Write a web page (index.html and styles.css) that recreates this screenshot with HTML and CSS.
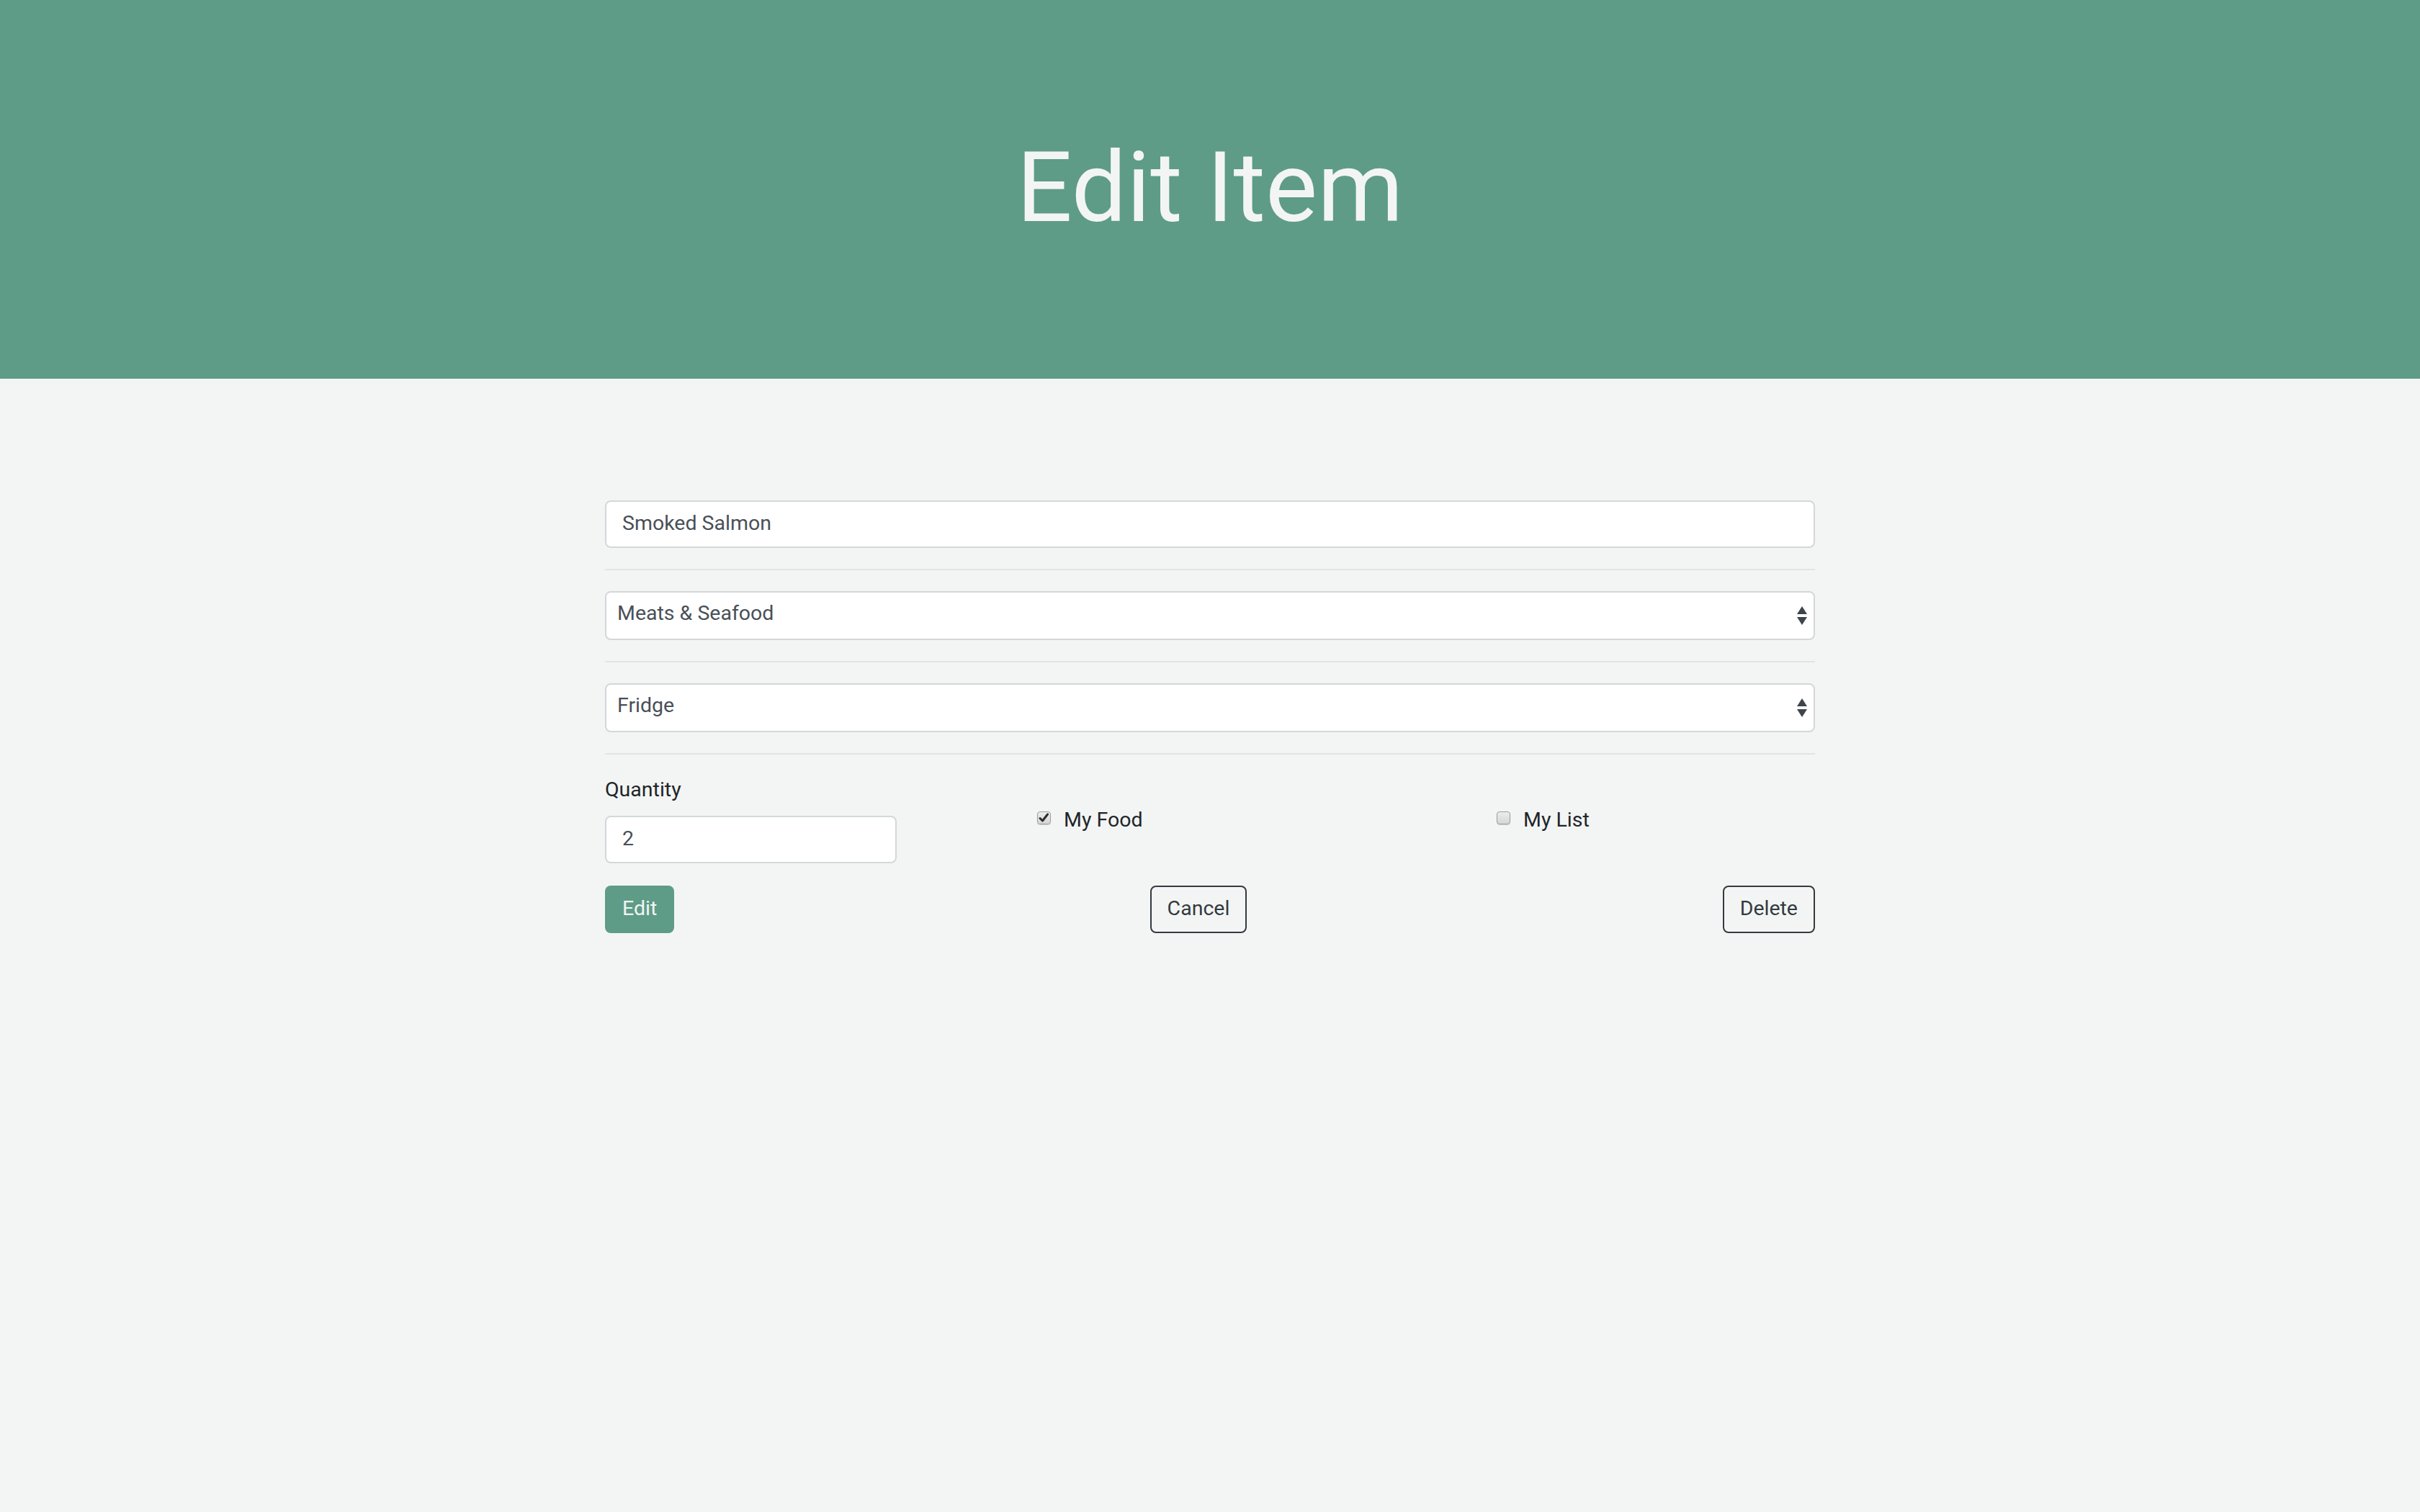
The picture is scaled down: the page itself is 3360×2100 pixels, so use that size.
FILE: index.html
```html
<!DOCTYPE html>
<html lang="en">
<head>
<meta charset="utf-8">
<title>Edit Item</title>
<link rel="stylesheet" href="styles.css">
</head>
<body>
<header class="hero">
  <h1 class="hero-title">Edit Item</h1>
</header>
<main class="container">
  <form class="item-form">
    <input class="field text-field" type="text" value="Smoked Salmon">
    <hr class="divider">
    <div class="select-wrap">
      <select class="field select-field"><option>Meats &amp; Seafood</option></select>
      <svg class="select-arrows" width="14" height="27" viewBox="0 0 14 27"><path d="M0 11 L7 0 L14 11 Z" fill="#3f454b"/><path d="M0 15 L14 15 L7 26 Z" fill="#3f454b"/></svg>
    </div>
    <hr class="divider">
    <div class="select-wrap">
      <select class="field select-field"><option>Fridge</option></select>
      <svg class="select-arrows" width="14" height="27" viewBox="0 0 14 27"><path d="M0 11 L7 0 L14 11 Z" fill="#3f454b"/><path d="M0 15 L14 15 L7 26 Z" fill="#3f454b"/></svg>
    </div>
    <hr class="divider">
    <div class="details">
      <div class="qty-group">
        <label class="qty-label">Quantity</label>
        <input class="field qty-input" type="text" value="2">
      </div>
      <label class="check">
        <span class="check-box">
          <svg width="15" height="14" viewBox="0 0 15 14"><path d="M2 7.5 L5.5 11 L12.5 2" fill="none" stroke="#2e2e2e" stroke-width="3" stroke-linecap="round" stroke-linejoin="round"/></svg>
        </span>
        <span class="check-text">My Food</span>
      </label>
      <label class="check">
        <span class="check-box"></span>
        <span class="check-text">My List</span>
      </label>
    </div>
    <div class="actions">
      <button type="button" class="btn btn-primary">Edit</button>
      <button type="button" class="btn btn-outline">Cancel</button>
      <button type="button" class="btn btn-outline">Delete</button>
    </div>
  </form>
</main>
</body>
</html>
```
FILE: styles.css
```css
* { box-sizing: border-box; }

html, body {
  margin: 0;
  padding: 0;
}

body {
  background: #f3f5f4;
  font-family: Roboto, "Liberation Sans", sans-serif;
  color: #212529;
  min-height: 2100px;
}

.hero {
  background: #5e9c87;
  height: 526px;
  display: flex;
  align-items: center;
  justify-content: center;
  padding-bottom: 4px;
}

.hero-title {
  margin: 0;
  font-size: 136px;
  font-weight: 400;
  line-height: 1.2;
  color: #f3f5f4;
}

.container {
  width: 1680px;
  margin: 0 auto;
  padding-top: 169px;
}

.item-form {
  display: flex;
  flex-direction: column;
}

.field {
  display: block;
  width: 100%;
  font-family: Roboto, "Liberation Sans", sans-serif;
  font-size: 28.5px;
  color: #495057;
  background: #ffffff;
  border: 2px solid #d3d7da;
  border-radius: 8px;
  outline: none;
  margin: 0;
}

.text-field {
  height: 66px;
  padding: 0 22px 4px;
}

.divider {
  height: 0;
  border: 0;
  border-top: 2px solid #e1e4e4;
  margin: 29px 0;
  width: 100%;
}

.select-wrap {
  position: relative;
}

.select-field {
  appearance: none;
  -webkit-appearance: none;
  height: 68px;
  padding: 0 40px 7px 15px;
}

.select-arrows {
  position: absolute;
  right: 11px;
  top: 50%;
  margin-top: -13px;
}

.details {
  display: grid;
  grid-template-columns: 600px 638px 1fr;
  align-items: center;
}

.qty-group {
  display: flex;
  flex-direction: column;
}

.qty-label {
  font-size: 28.5px;
  line-height: 40px;
  color: #212529;
  margin-bottom: 16px;
}

.qty-input {
  width: 405px;
  height: 66px;
  padding: 0 22px 4px;
}

.check {
  display: flex;
  align-items: center;
  gap: 18px;
  font-size: 28.5px;
  line-height: 45px;
  color: #212529;
}

.check-box {
  width: 19px;
  height: 18px;
  border: 1.5px solid #9c9c9c;
  border-radius: 4px;
  background: linear-gradient(#ececec, #d6d6d6);
  box-shadow: 0 1px 1px rgba(0,0,0,0.15);
  display: flex;
  align-items: center;
  justify-content: center;
  margin-top: -4px;
}

.actions {
  display: flex;
  justify-content: space-between;
  margin-top: 31px;
}

.btn {
  height: 66px;
  padding: 0 22px 3px;
  font-family: Roboto, "Liberation Sans", sans-serif;
  font-size: 28.5px;
  border-radius: 8px;
  border: 2px solid transparent;
  cursor: pointer;
}

.btn-primary {
  background: #5e9c87;
  color: #f3f5f4;
}

.btn-outline {
  background: transparent;
  border-color: #343a40;
  color: #343a40;
}
```
